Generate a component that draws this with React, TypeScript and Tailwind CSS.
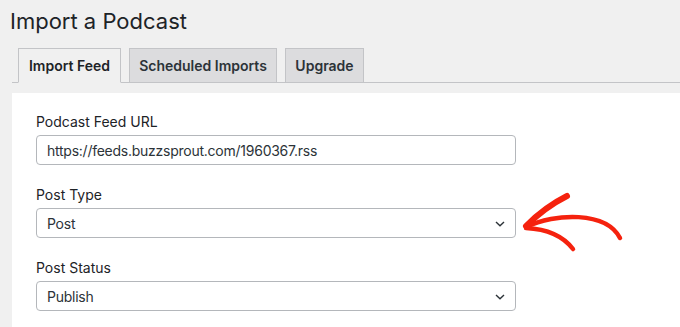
import React from "react";

const Chevron = () => (
  <svg width="12" height="8" viewBox="0 0 12 8" className="absolute right-[9px] top-[11px]">
    <path d="M2 2 L6 5.8 L10 2" fill="none" stroke="#2c3338" strokeWidth="1.4" />
  </svg>
);

function Field({ label, value, select }: { label: string; value: string; select?: boolean }) {
  return (
    <div className="flex flex-col">
      <label className="text-[14px] leading-[20px] text-[#1d2327]">{label}</label>
      <div className="relative mt-[3px] w-[480px] h-[30px] border border-[#b4b7bb] rounded-[4px] bg-white flex items-center pl-[10px] text-[14px] tracking-[-0.25px] text-[#2c3338]">
        {value}
        {select && <Chevron />}
      </div>
    </div>
  );
}

export default function App() {
  return (
    <div
      className="relative w-[680px] h-[327px] overflow-hidden bg-[#f0f0f0]"
      style={{ fontFamily: "Inter, 'Noto Sans', sans-serif" }}
    >
      <h1 className="pl-[10px] pt-[6px] text-[22px] leading-[30px] font-normal text-[#1d2327]">Import a Podcast</h1>
      <div className="ml-[12px] mt-[12px] flex gap-[8px] pl-[6px] border-b border-[#c3c4c7]">
        <div className="-mb-px h-[35px] w-[103px] flex items-center justify-center border border-[#c3c4c7] border-b-[#f0f0f0] bg-[#f0f0f0] text-[14px] font-semibold text-[#1d2327]">
          Import Feed
        </div>
        <div className="-mb-px h-[35px] w-[148px] flex items-center justify-center border border-[#c3c4c7] bg-[#dcdcde] text-[14px] font-semibold text-[#2c3338]">
          Scheduled Imports
        </div>
        <div className="-mb-px h-[35px] w-[79px] flex items-center justify-center border border-[#c3c4c7] bg-[#dcdcde] text-[14px] font-semibold text-[#2c3338]">
          Upgrade
        </div>
      </div>
      <div className="ml-[12px] mt-[10px] bg-white h-[300px] pl-[24px] pt-[19px] flex flex-col gap-[20px]">
        <Field label="Podcast Feed URL" value="https://feeds.buzzsprout.com/1960367.rss" />
        <Field label="Post Type" value="Post" select />
        <Field label="Post Status" value="Publish" select />
      </div>
      <svg className="absolute left-0 top-0 pointer-events-none" width="680" height="327" viewBox="0 0 680 327">
        <g fill="none" stroke="#f5220e" strokeLinecap="round" strokeLinejoin="round">
          <path d="M567 196 Q545 207 526 226" strokeWidth="6" />
          <path d="M526 227 C555 213 606 211 620 238" strokeWidth="4.5" />
          <path d="M526 228 C546 229 563 236 573 249" strokeWidth="4.5" />
        </g>
      </svg>
    </div>
  );
}
